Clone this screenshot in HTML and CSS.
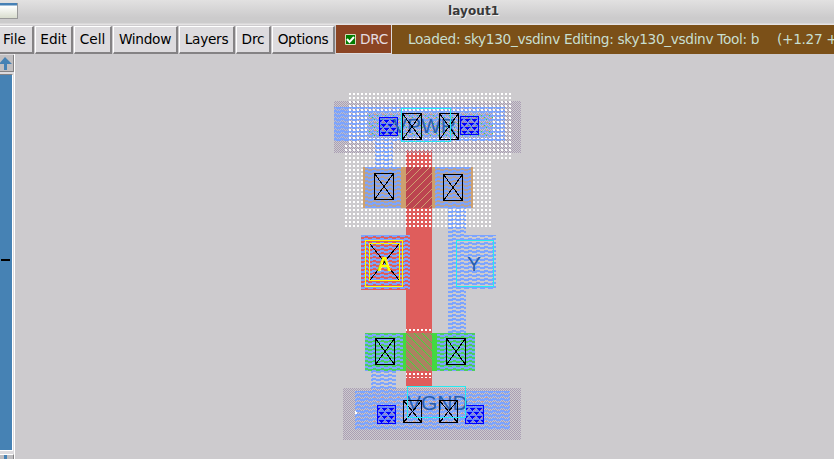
FILE: index.html
```
<!DOCTYPE html>
<html lang="en">
<head>
<meta charset="utf-8">
<title>layout1</title>
<link rel="stylesheet" href="styles.css">
</head>
<body>
<div class="window">
<header class="titlebar"><span class="corner"></span><h1>layout1</h1></header>
<nav class="menubar">
<button class="file">File</button><button class="edit">Edit</button><button class="cell">Cell</button><button class="win">Window</button><button class="layers">Layers</button><button class="drc">Drc</button><button class="options">Options</button>
<div class="check"><svg width="11" height="11"><path class="box" d="M.5 .5h10v10h-10z"/><path class="tick" d="M2 5l2.5 3L9 3"/></svg><span>DRC</span></div>
<div class="status"><span class="message">Loaded: sky130_vsdinv Editing: sky130_vsdinv Tool: b</span><span>(+1.27 +</span></div>
</nav>
<main class="work">
<aside class="scroll">
<div class="up"><svg width="12" height="14"><path d="M5 0L12 7H7v6H4V7H-1z"/></svg></div>
<div class="trough"><i class="thumb"></i></div>
<div class="down"><i></i></div>
</aside>
<svg class="layout" width="819" height="405" viewBox="15 54 819 405">
<defs>
<pattern id="dots" x="345" y="93" width="4" height="4" patternUnits="userSpaceOnUse"><path fill="#fff" d="M0 0h2v2h-2z"/></pattern>
<pattern id="check" width="2" height="2" patternUnits="userSpaceOnUse"><path fill="#aa9eb4" d="M0 0h1v1h-1zM1 1h1v1h-1z"/></pattern>
<pattern id="metal" x="0" y="3" width="8" height="4" patternUnits="userSpaceOnUse"><path fill="#7ba4ff" d="M0 0h8v1h-8zM0 1h5v1h-5zM4 3h4v1h-4z"/></pattern>
<pattern id="local" x="1" y="1" width="8" height="8" patternUnits="userSpaceOnUse"><path fill="#45d83e" d="M0 2h1v1h-1zM5 6h1v1h-1zM3 4h1v1h-1z"/><path fill="#d8a083" d="M5 1h2v1h-2zM1 5h2v1h-2z"/></pattern>
<pattern id="tap" width="8" height="8" patternUnits="userSpaceOnUse"><path fill="#d7a18d" d="M1 1h2v1h-2zM5 5h2v1h-2z"/></pattern>
<pattern id="up" x="406" y="167" width="8" height="8" patternUnits="userSpaceOnUse"><path fill="#cfa070" d="M7 0h1v1h-1zM6 1h1v1h-1zM5 2h1v1h-1zM4 3h1v1h-1zM3 4h1v1h-1zM2 5h1v1h-1zM1 6h1v1h-1zM0 7h1v1h-1z"/></pattern>
<pattern id="down" x="406" y="333" width="8" height="8" patternUnits="userSpaceOnUse"><path fill="#3edb3c" d="M0 0h1v1h-1zM1 1h1v1h-1zM2 2h1v1h-1zM3 3h1v1h-1zM4 4h1v1h-1zM5 5h1v1h-1zM6 6h1v1h-1zM7 7h1v1h-1z"/></pattern>
<g id="via"><path fill="#00f" opacity=".2" d="M1 1h17v17h-17z"/><path fill="none" stroke="#00f" d="M.5 .5h18v18h-18z"/><path fill="#00f" d="M1 3h2v1h-1v1h-1zM5 3h5v1h-1v1h-1v1h-1v-1h-1v-1h-1zM12 3h5v1h-1v1h-1v1h-1v-1h-1v-1h-1zM2 7h5v1h-1v1h-1v1h-1v-1h-1v-1h-1zM9 7h5v1h-1v1h-1v1h-1v-1h-1v-1h-1zM5 11h5v1h-1v1h-1v1h-1v-1h-1v-1h-1zM12 11h5v1h-1v1h-1v1h-1v-1h-1v-1h-1zM2 15h5v1h-1v1h-1v1h-1v-1h-1v-1h-1zM9 15h5v1h-1v1h-1v1h-1v-1h-1v-1h-1zM1 11h2v1h-1v1h-1zM16 7h2v2h-1v-1h-1zM16 15h2v2h-1v-1h-1z"/></g>
<g id="cut"><path fill="none" stroke="#000" d="M.5 .5h19v26h-19zM.5 .5l19 26m0-26l-19 26"/></g>
<g id="cutshort"><path fill="none" stroke="#000" d="M.5 .5h18v22h-18zM.5 .5l18 22m0-22l-18 22"/></g>
</defs>
<g shape-rendering="crispEdges">
<path fill="#df5d5c" d="M406 150h26v236h-26zM361 235h49v55h-49z"/>
<path fill="#cda06e" d="M363 167h110v41h-110z"/>
<path fill="#bc4450" d="M406 167h26v41h-26z"/><path fill="url(#up)" d="M406 167h26v41h-26z"/>
<path fill="#43d940" d="M365 333h110v38h-110z"/>
<path fill="#ac8261" d="M406 333h26v38h-26z"/><path fill="url(#down)" d="M406 333h26v38h-26z"/>
<path fill="url(#check)" d="M334 101h187v52h-187zM343 388h178v52h-178z"/>
<path fill="#7ba4ff" opacity=".15" d="M334 107h171v34h-171zM355 391h155v39h-155zM365 333h38v38h-38zM437 333h38v38h-38z"/>
<path fill="#7ba4ff" opacity=".3" d="M334 107h15v34h-15zM365 167h36v41h-36zM435 167h36v41h-36z"/>
<path fill="url(#metal)" d="M334 107h171v34h-171zM375 141h18v26h-18zM365 167h36v41h-36zM435 167h36v41h-36zM448 208h18v125h-18zM466 235h30v55h-30zM361 235h49v55h-49zM365 333h38v38h-38zM437 333h38v38h-38zM371 371h25v20h-25zM355 391h155v39h-155z"/>
<path fill="url(#local)" d="M368 113h125v25h-125z"/>
<path fill="url(#tap)" d="M371 395h119v30h-119z"/>
<path fill="url(#dots)" d="M349 93h162v20h-162zM349 113h19v32h-19zM493 113h18v32h-18zM368 138h125v7h-125zM345 145h166v14h-166zM345 159h146v8h-146zM345 167h18v41h-18zM473 167h18v41h-18zM345 208h146v19h-146zM406 329h26v4h-26zM406 371h26v7h-26z"/>
<use href="#via" x="379" y="117"/><use href="#via" x="460" y="116"/><use href="#via" x="377" y="405"/><use href="#via" x="465" y="405"/>
</g>
<g class="label"><text x="393" y="133">VPWR</text><text x="407" y="410">VGND</text><text x="467" y="271">Y</text></g>
<g shape-rendering="crispEdges">
<use href="#cut" x="402" y="113"/><use href="#cut" x="439" y="113"/><use href="#cut" x="374" y="173"/><use href="#cut" x="443" y="174"/><use href="#cut" x="375" y="338"/><use href="#cut" x="446" y="338"/><use href="#cutshort" x="403" y="400"/><use href="#cutshort" x="439" y="400"/>
<path fill="none" stroke="#25eaf1" d="M401.5 108.5h49v33h-49zM456.5 240.5h37v46h-37zM407.5 386.5h58v31h-58z"/>
<path fill="none" stroke="#000" d="M370 244l29 36m0-36l-29 36"/>
<path fill="none" stroke="#ff0" d="M365.500 240.500h37v46h-37zM369.500 243.500h30v37h-30z"/>
<path fill="#fff" d="M355 411h1v1h1v2h-2z"/>
</g>
<text class="selected" x="377" y="271">A</text>
</svg>
</main>
</div>
</body>
</html>
```
FILE: styles.css
```
*{box-sizing:border-box}
body{margin:0;font:14px "DejaVu Sans",sans-serif;background:#cdcbce}
.window{width:834px;height:459px;overflow:hidden;display:flex;flex-direction:column}
.titlebar{height:25px;flex:none;display:flex;align-items:flex-start;background:linear-gradient(#e2e1e1,#cccbcc 70%,#cccbcc 92%,#e5e3e4 96%)}
.corner{width:18px;height:16px;margin-top:3px;background:linear-gradient(#4680b5 2px,#fff 3px,#d9ddce);border:solid #999;border-width:0 1px 1px 0}
h1{margin:3px 0 0 430px;font:bold 12px/16px "DejaVu Sans",sans-serif;letter-spacing:.1px;color:#393939;text-shadow:1px 1px #f2f2f2}
.menubar{height:29px;flex:none;display:flex;background:#cdcbce}
button{height:28px;margin:1px 1px 0 0;padding:0 0 1px;border:solid;border-width:1px 2px 2px 1px;border-color:#fff #848284 #848284 #fff;background:#dddbde;color:#000;font:13.7px "DejaVu Sans",sans-serif;flex:none;white-space:nowrap}
.file{width:34px;border-left:0;padding-right:3px}.edit{width:38px}.cell{width:38px}.win{width:65px;letter-spacing:-.3px}.layers{width:56px;letter-spacing:-.3px}.drc{width:35px;letter-spacing:-.2px}.options{width:63px;letter-spacing:-.3px}
.check{width:56px;flex:none;background:#8b4423;border:solid #dddbde;border-width:0 1px 1px 0;color:#e4dce0;display:flex;align-items:center;padding-left:9px;gap:4px;font-size:13.7px;letter-spacing:-.3px}
.box{fill:#007c00;stroke:#d8d8b8}.tick{fill:none;stroke:#fff;stroke-width:2}
.check svg{flex:none}
.status{flex:1;background:#7b5018;color:#c8dfd0;padding-left:16px;line-height:28px;white-space:nowrap;overflow:hidden;display:flex;font-size:13.7px;letter-spacing:-.34px}
.message{width:351px;margin-right:18px;overflow:hidden;flex:none}
.work{display:flex;height:405px}
.scroll{width:15px;background:#dddbde;border-right:1px solid #fff;display:flex;flex-direction:column}
.up{height:17px;width:14px;margin-top:1px;background:#c1bfc1;border:solid #848284;border-width:0 1px 1px 0;padding-top:2px}
.up svg{display:block;fill:#4682b4}
.trough{height:379px;margin-top:2px;width:13px;background:#4682b4;border:solid #fff;border-width:0 1px 1px 0;border-top:1px solid #848284;padding:184px 0 0 1px}
.thumb{display:block;width:9px;height:2px;background:#000}
.down{height:5px;margin-top:3px;background:#bebdc0;width:14px;border:solid #848284;border-width:0 1px 0 0;border-top:1px solid #fff;padding-left:4px}
.down i{display:block;width:3px;height:4px;background:#4682b4}
.layout{display:block;flex:none}
.label{font:21px "Liberation Sans",sans-serif;fill:#285faf}
.selected{font:bold 20px "Liberation Sans",sans-serif;fill:#ff0}
```
